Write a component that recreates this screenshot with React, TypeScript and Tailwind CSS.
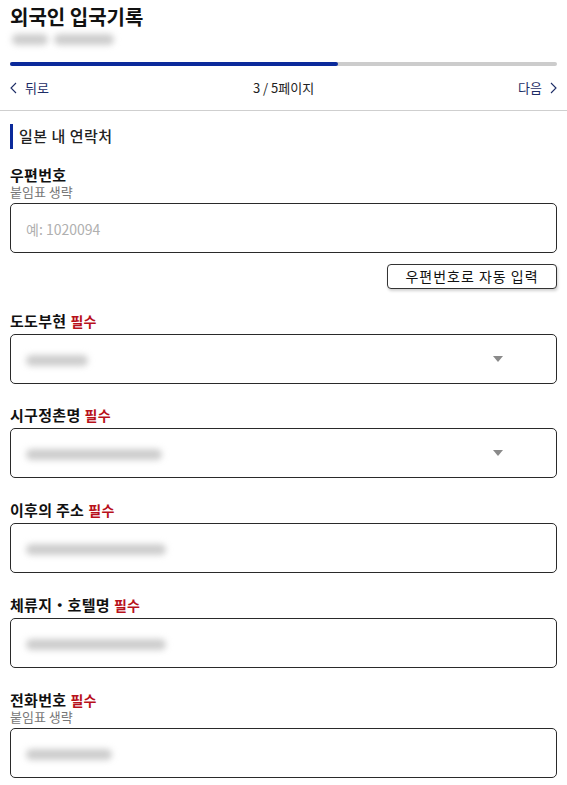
import React from "react";

const FONT = { fontFamily: '"Noto Sans CJK KR", "Noto Sans", sans-serif' };

function Label({ text, required, note }: { text: string; required?: boolean; note?: string }) {
  return (
    <div className="mb-[3px]">
      <div
        className={
          note
            ? "h-[19px] leading-[19px] text-[15px] font-bold tracking-[0.3px] text-[#111]"
            : "h-[20px] leading-[20px] text-[15px] font-bold tracking-[0.3px] text-[#111]"
        }
      >
        {text}
        {required && <span className="ml-[4px] text-[14px] font-bold text-[#b8111b]">필수</span>}
      </div>
      {note && <div className="h-[16px] leading-[16px] text-[13px] text-[#777]">{note}</div>}
    </div>
  );
}

function Blur({ w }: { w: number }) {
  return (
    <span
      className="inline-block h-[11px] rounded-full bg-[#cdcdcd] blur-[3px]"
      style={{ width: w }}
    />
  );
}

function Box({ children, select }: { children?: React.ReactNode; select?: boolean }) {
  return (
    <div className="relative flex h-[50px] items-center rounded-[5px] border border-[#2a2a2a] bg-white pl-[15px] pr-[12px]">
      <div className="flex-1">{children}</div>
      {select && (
        <svg width="10" height="6" viewBox="0 0 10 6" className="mr-[41px]">
          <path d="M0 0 L10 0 L5 6 Z" fill="#8a8a8a" />
        </svg>
      )}
    </div>
  );
}

export default function App() {
  return (
    <div className="min-h-[785px] bg-white text-[#111]" style={FONT}>
      <div className="px-[10px]">
        <div className="mt-[3px] h-[28px] leading-[28px] text-[20px] font-bold text-[#111]">외국인 입국기록</div>
        <div className="flex h-[16px] items-center gap-[6px] pl-[2px]">
          <Blur w={36} />
          <Blur w={60} />
        </div>
        <div className="mt-[15px] h-[4px] w-full rounded-full bg-[#cccccc]">
          <div className="h-[4px] rounded-full bg-[#0b2a9b]" style={{ width: "60%" }} />
        </div>
        <div className="flex h-[44px] items-center justify-between text-[13px]">
          <div className="flex items-center gap-[8px] text-[#1d2d66]">
            <svg width="7" height="12" viewBox="0 0 7 12">
              <path d="M6 1 L1 6 L6 11" fill="none" stroke="#1d2d66" strokeWidth="1.1" />
            </svg>
            <span>뒤로</span>
          </div>
          <div className="text-[#222]">3 / 5페이지</div>
          <div className="flex items-center gap-[8px] text-[#1d2d66]">
            <span>다음</span>
            <svg width="7" height="12" viewBox="0 0 7 12">
              <path d="M1 1 L6 6 L1 11" fill="none" stroke="#1d2d66" strokeWidth="1.1" />
            </svg>
          </div>
        </div>
      </div>
      <div className="border-b border-[#cfcfcf]" />

      <div className="px-[10px]">
        <div className="mt-[13px] flex h-[25px] items-center">
          <div className="h-[25px] w-[3px] bg-[#0b2a9b]" />
          <div className="ml-[6px] text-[15px] font-medium tracking-[0.5px] text-[#222]">일본 내 연락처</div>
        </div>

        <div className="mt-[16px]">
          <Label text="우편번호" note="붙임표 생략" />
          <Box>
            <span className="text-[14px] text-[#b0b0b0]">예: 1020094</span>
          </Box>
          <div className="mt-[11px] flex justify-end">
            <button className="h-[25px] w-[170px] rounded-[4px] border border-[#333] bg-white text-[14px] tracking-[1px] text-[#111] shadow-[1px_2px_3px_rgba(0,0,0,0.18)]">
              우편번호로 자동 입력
            </button>
          </div>
        </div>

        <div className="mt-[22px]">
          <Label text="도도부현" required />
          <Box select>
            <Blur w={62} />
          </Box>
        </div>

        <div className="mt-[21px]">
          <Label text="시구정촌명" required />
          <Box select>
            <Blur w={136} />
          </Box>
        </div>

        <div className="mt-[22px]">
          <Label text="이후의 주소" required />
          <Box>
            <Blur w={140} />
          </Box>
        </div>

        <div className="mt-[22px]">
          <Label text="체류지・호텔명" required />
          <Box>
            <Blur w={140} />
          </Box>
        </div>

        <div className="mt-[22px]">
          <Label text="전화번호" required note="붙임표 생략" />
          <Box>
            <Blur w={86} />
          </Box>
        </div>
      </div>
    </div>
  );
}
